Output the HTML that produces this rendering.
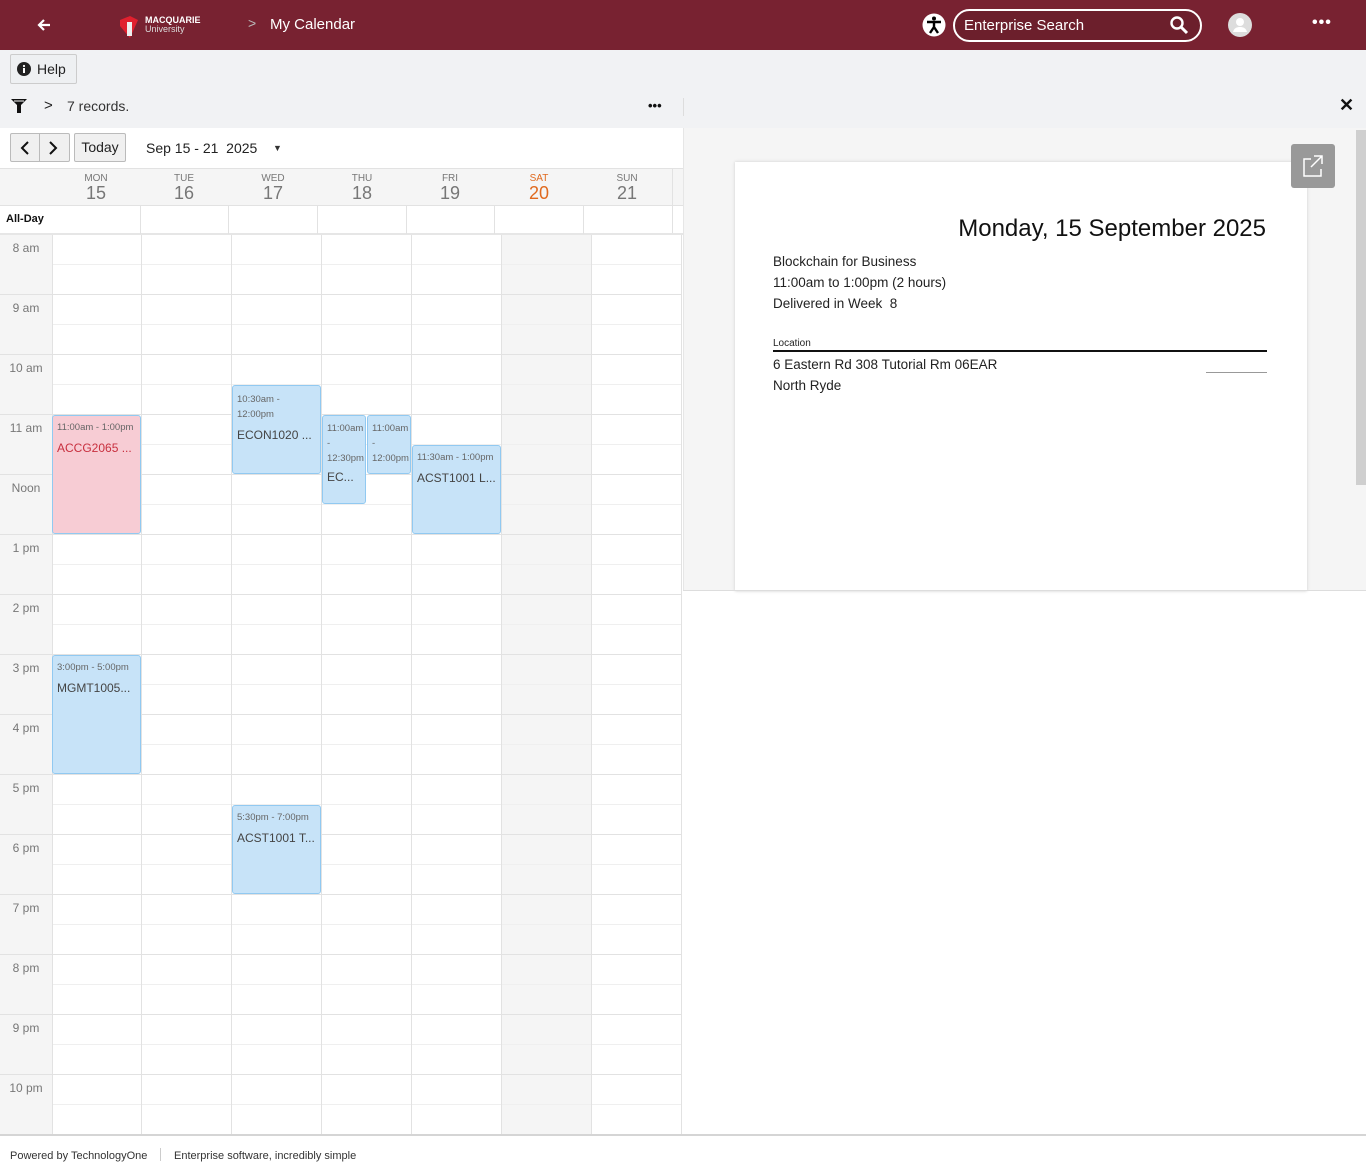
<!DOCTYPE html>
<html><head><meta charset="utf-8"><style>
*{box-sizing:border-box;margin:0;padding:0}
body{width:1366px;height:1176px;position:relative;font-family:"Liberation Sans",sans-serif;background:#fff;overflow:hidden;color:#333}
.a{position:absolute}
.hdr{left:0;top:0;width:1366px;height:50px;background:#782231}
.tb{left:0;top:50px;width:1366px;height:78px;background:#f1f2f4}
.lbl{font-size:12px;color:#777;width:52px;text-align:center}
.vl{width:1px;background:#e2e2e2}
.ev{background:#c7e3f8;border:1px solid #91c9f1;border-radius:3px;overflow:hidden;font-size:9.5px;color:#666;padding:6px 4px;white-space:nowrap}
.ev b{display:block;font-weight:normal;font-size:12px;color:#444;margin-top:8px}
.dh{font-size:10px;color:#777;text-align:center;width:88px}
.dh span{display:block;font-size:18px;color:#777;line-height:18px}
</style></head><body>
<div class="a hdr"></div>
<svg class="a" style="left:36px;top:17px" width="16" height="16" viewBox="0 0 16 16"><path d="M14 8H3M8 3L3 8l5 5" stroke="#fff" stroke-width="2.2" fill="none"/></svg>
<svg class="a" style="left:118px;top:14px" width="24" height="24" viewBox="0 0 24 24"><path d="M2 6L12 2l8 4-8 18L2 12z" fill="#e0202e"/><rect x="9" y="8" width="5" height="14" fill="#eee"/></svg>
<div class="a" style="left:145px;top:16px;color:#fff;font-size:9px;font-weight:bold;line-height:9px">MACQUARIE<br><span style="font-weight:normal;color:#ddd">University</span></div>
<div class="a" style="left:248px;top:15px;color:#bbb;font-size:14px">&gt;</div>
<div class="a" style="left:270px;top:16px;color:#fff;font-size:15px">My Calendar</div>
<svg class="a" style="left:922px;top:13px" width="24" height="24" viewBox="0 0 24 24"><circle cx="12" cy="12" r="11.5" fill="#fff"/><circle cx="12" cy="5.5" r="2" fill="#000"/><path d="M5 9h14M12 9v5l-4 6M12 14l4 6" stroke="#000" stroke-width="2.4" fill="none"/></svg>
<div class="a" style="left:953px;top:9px;width:249px;height:33px;border:2px solid #fff;border-radius:17px;background:#6c1f2c"></div>
<div class="a" style="left:964px;top:17px;color:#fff;font-size:15px">Enterprise Search</div>
<svg class="a" style="left:1169px;top:15px" width="20" height="20" viewBox="0 0 20 20"><circle cx="8" cy="8" r="5.5" stroke="#fff" stroke-width="2.4" fill="none"/><path d="M12 12l6 6" stroke="#fff" stroke-width="3"/></svg>
<svg class="a" style="left:1228px;top:13px" width="24" height="24" viewBox="0 0 24 24"><circle cx="12" cy="12" r="12" fill="#ddd"/><circle cx="12" cy="9" r="4" fill="#fff"/><path d="M5 19c1-4 4-5 7-5s6 1 7 5z" fill="#fff"/></svg>
<div class="a" style="left:1312px;top:14px;color:#fff;font-size:16px;font-weight:bold;letter-spacing:1px">•••</div>

<div class="a tb"></div>
<div class="a" style="left:10px;top:54px;width:67px;height:30px;border:1px solid #ccc;border-radius:2px;background:#eef0f2"></div>
<svg class="a" style="left:17px;top:62px" width="14" height="14" viewBox="0 0 14 14"><circle cx="7" cy="7" r="7" fill="#222"/><rect x="6" y="6" width="2" height="5" fill="#fff"/><circle cx="7" cy="4" r="1.1" fill="#fff"/></svg>
<div class="a" style="left:37px;top:61px;font-size:14px;color:#222">Help</div>
<svg class="a" style="left:11px;top:98px" width="16" height="16" viewBox="0 0 16 16"><path d="M0 1h16L10 7v8H6V7z" fill="#111"/><path d="M3 3h10" stroke="#fff"/></svg>
<div class="a" style="left:44px;top:97px;font-size:15px;color:#222">&gt;</div>
<div class="a" style="left:67px;top:98px;font-size:14px;color:#333">7 records.</div>
<div class="a" style="left:648px;top:98px;font-size:13px;font-weight:bold;color:#111">•••</div>
<div class="a" style="left:683px;top:98px;width:1px;height:18px;background:#ddd"></div>
<div class="a" style="left:1339px;top:95px;font-size:18px;font-weight:bold;color:#111">✕</div>

<div class="a" style="left:0;top:128px;width:683px;height:40px;background:#fff"></div>
<div class="a" style="left:10px;top:133px;width:60px;height:29px;border:1px solid #bbb;border-radius:2px;background:#f0f0f0"></div>
<div class="a" style="left:39px;top:133px;width:1px;height:29px;background:#bbb"></div>
<svg class="a" style="left:18px;top:140px" width="44" height="16" viewBox="0 0 44 16"><path d="M10 2L4 8l6 6M32 2l6 6-6 6" stroke="#111" stroke-width="2" fill="none"/></svg>
<div class="a" style="left:74px;top:133px;width:52px;height:29px;border:1px solid #bbb;border-radius:2px;background:#f0f0f0;font-size:14px;text-align:center;line-height:27px;color:#222">Today</div>
<div class="a" style="left:146px;top:140px;font-size:14px;color:#222">Sep 15 - 21&nbsp; 2025</div>
<div class="a" style="left:273px;top:143px;font-size:9px;color:#333">▼</div>

<div class="a" style="left:0;top:168px;width:683px;height:38px;background:#f5f5f5;border-top:1px solid #e2e2e2;border-bottom:1px solid #e2e2e2"></div>
<div class="a dh" style="left:52px;top:173px">MON<span>15</span></div>
<div class="a dh" style="left:140px;top:173px">TUE<span>16</span></div>
<div class="a dh" style="left:229px;top:173px">WED<span>17</span></div>
<div class="a dh" style="left:318px;top:173px">THU<span>18</span></div>
<div class="a dh" style="left:406px;top:173px">FRI<span>19</span></div>
<div class="a dh" style="left:495px;top:173px;color:#e06a1f">SAT<span style="color:#e06a1f">20</span></div>
<div class="a dh" style="left:583px;top:173px">SUN<span>21</span></div>
<div class="a" style="left:672px;top:168px;width:1px;height:66px;background:#e2e2e2"></div>
<div class="a" style="left:6px;top:213px;font-size:11px;font-weight:bold;color:#111">All-Day</div>
<div class="a" style="left:0;top:233px;width:683px;height:2px;background:#e6e6e6"></div>
<div class="a vl" style="left:140px;top:206px;height:28px"></div>
<div class="a vl" style="left:228px;top:206px;height:28px"></div>
<div class="a vl" style="left:317px;top:206px;height:28px"></div>
<div class="a vl" style="left:406px;top:206px;height:28px"></div>
<div class="a vl" style="left:494px;top:206px;height:28px"></div>
<div class="a vl" style="left:583px;top:206px;height:28px"></div>

<div class="a" style="left:0;top:235px;width:52px;height:900px;background:#f5f5f5"></div>
<div class="a" style="left:502px;top:235px;width:89px;height:900px;background:#f5f5f5"></div>
<div class="a" style="left:52px;top:235px;width:630px;height:900px;background:repeating-linear-gradient(to bottom,transparent 0,transparent 29px,#efefef 29px,#efefef 30px,transparent 30px,transparent 59px,#e2e2e2 59px,#e2e2e2 60px)"></div>
<div class="a" style="left:0;top:235px;width:52px;height:900px;background:repeating-linear-gradient(to bottom,transparent 0,transparent 59px,#e2e2e2 59px,#e2e2e2 60px)"></div>
<div class="a vl" style="left:52px;top:235px;height:900px"></div>
<div class="a vl" style="left:141px;top:235px;height:900px"></div>
<div class="a vl" style="left:231px;top:235px;height:900px"></div>
<div class="a vl" style="left:321px;top:235px;height:900px"></div>
<div class="a vl" style="left:411px;top:235px;height:900px"></div>
<div class="a vl" style="left:501px;top:235px;height:900px"></div>
<div class="a vl" style="left:591px;top:235px;height:900px"></div>
<div class="a vl" style="left:681px;top:235px;height:900px"></div>
<div class="a lbl" style="left:0;top:241px">8 am</div>
<div class="a lbl" style="left:0;top:301px">9 am</div>
<div class="a lbl" style="left:0;top:361px">10 am</div>
<div class="a lbl" style="left:0;top:421px">11 am</div>
<div class="a lbl" style="left:0;top:481px">Noon</div>
<div class="a lbl" style="left:0;top:541px">1 pm</div>
<div class="a lbl" style="left:0;top:601px">2 pm</div>
<div class="a lbl" style="left:0;top:661px">3 pm</div>
<div class="a lbl" style="left:0;top:721px">4 pm</div>
<div class="a lbl" style="left:0;top:781px">5 pm</div>
<div class="a lbl" style="left:0;top:841px">6 pm</div>
<div class="a lbl" style="left:0;top:901px">7 pm</div>
<div class="a lbl" style="left:0;top:961px">8 pm</div>
<div class="a lbl" style="left:0;top:1021px">9 pm</div>
<div class="a lbl" style="left:0;top:1081px">10 pm</div>

<div class="a ev" style="left:52px;top:415px;width:89px;height:119px;background:#f7ccd4">11:00am - 1:00pm<b style="color:#c8303f">ACCG2065 ...</b></div>
<div class="a ev" style="left:232px;top:385px;width:89px;height:89px;line-height:15px">10:30am -<br>12:00pm<b style="margin-top:6px">ECON1020 ...</b></div>
<div class="a ev" style="left:322px;top:415px;width:44px;height:89px;line-height:15px;padding:5px 4px">11:00am<br>-<br>12:30pm<b style="margin-top:4px">EC...</b></div>
<div class="a ev" style="left:367px;top:415px;width:44px;height:59px;line-height:15px;padding:5px 4px">11:00am<br>-<br>12:00pm</div>
<div class="a ev" style="left:412px;top:445px;width:89px;height:89px">11:30am - 1:00pm<b>ACST1001 L...</b></div>
<div class="a ev" style="left:52px;top:655px;width:89px;height:119px">3:00pm - 5:00pm<b>MGMT1005...</b></div>
<div class="a ev" style="left:232px;top:805px;width:89px;height:89px">5:30pm - 7:00pm<b>ACST1001 T...</b></div>

<div class="a" style="left:683px;top:128px;width:683px;height:463px;background:#f5f5f5;border-left:1px solid #e6e6e6"></div>
<div class="a" style="left:735px;top:162px;width:572px;height:429px;background:#fff;box-shadow:0 0 3px #ccc"></div>
<div class="a" style="left:683px;top:590px;width:683px;height:1px;background:#ddd"></div>
<div class="a" style="left:1356px;top:130px;width:10px;height:355px;background:#cfcfcf"></div>
<div class="a" style="left:1291px;top:144px;width:44px;height:44px;background:#999;border-radius:3px"></div>
<svg class="a" style="left:1303px;top:155px" width="20" height="22" viewBox="0 0 20 22"><path d="M8 4H1v17h17v-7M11 1h8v8M19 1L8 12" stroke="#fff" stroke-width="1.5" fill="none"/></svg>
<div class="a" style="left:735px;top:215px;width:531px;text-align:right;font-size:24px;color:#111">Monday, 15 September 2025</div>
<div class="a" style="left:773px;top:251px;font-size:13.5px;line-height:21px;color:#222">Blockchain for Business<br>11:00am to 1:00pm (2 hours)<br>Delivered in Week&nbsp; 8</div>
<div class="a" style="left:773px;top:338px;font-size:10px;color:#222">Location</div>
<div class="a" style="left:773px;top:350px;width:494px;height:2px;background:#111"></div>
<div class="a" style="left:773px;top:354px;font-size:13.5px;line-height:21px;color:#222">6 Eastern Rd 308 Tutorial Rm 06EAR<br>North Ryde</div>
<div class="a" style="left:1206px;top:372px;width:61px;height:1px;background:#999"></div>

<div class="a" style="left:0;top:1134px;width:1366px;height:2px;background:#d5d5d5"></div>
<div class="a" style="left:10px;top:1150px;font-size:11px;color:#333">Powered by TechnologyOne</div>
<div class="a" style="left:160px;top:1148px;width:1px;height:13px;background:#ccc"></div>
<div class="a" style="left:174px;top:1150px;font-size:11px;color:#333">Enterprise software, incredibly simple</div>
</body></html>
